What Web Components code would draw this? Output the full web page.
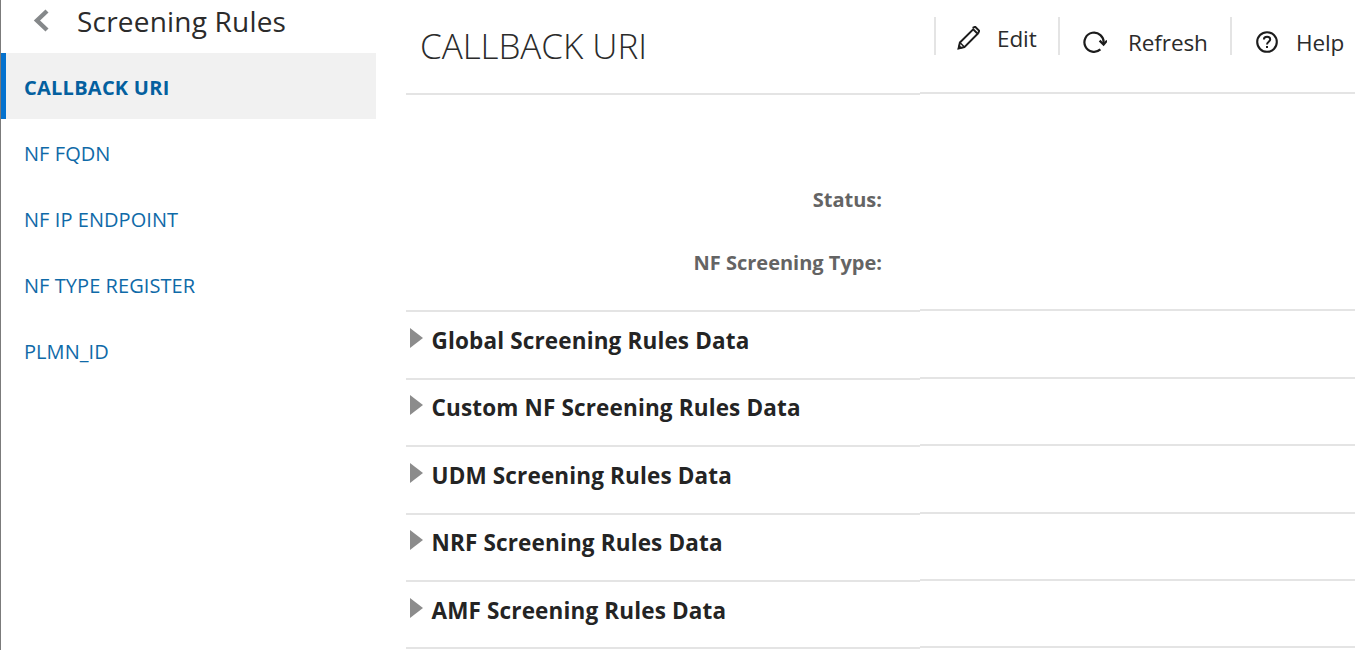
<!DOCTYPE html>
<html>
<head>
<meta charset="utf-8">
<title>Screening Rules</title>
<style>
  html, body { margin: 0; height: 100%; overflow: hidden; background: #fff; }
  body { font-family: "Open Sans", "Noto Sans", sans-serif; color: #2b2b2b; }
  #page { display: flex; height: 650px; border-left: 1px solid #7b7b7b; box-sizing: border-box; }
</style>
</head>
<body>
<div id="page">
  <su-side-nav title="Screening Rules">
    <su-nav-item selected>CALLBACK URI</su-nav-item>
    <su-nav-item>NF FQDN</su-nav-item>
    <su-nav-item>NF IP ENDPOINT</su-nav-item>
    <su-nav-item>NF TYPE REGISTER</su-nav-item>
    <su-nav-item>PLMN_ID</su-nav-item>
  </su-side-nav>
  <su-detail>
    <su-page-head title="CALLBACK URI"></su-page-head>
    <su-form-block>
      <su-field label="Status:"></su-field>
      <su-field label="NF Screening Type:"></su-field>
    </su-form-block>
    <su-collapsible>Global Screening Rules Data</su-collapsible>
    <su-collapsible>Custom NF Screening Rules Data</su-collapsible>
    <su-collapsible>UDM Screening Rules Data</su-collapsible>
    <su-collapsible>NRF Screening Rules Data</su-collapsible>
    <su-collapsible>AMF Screening Rules Data</su-collapsible>
  </su-detail>
</div>

<script>
class SideNav extends HTMLElement {
  constructor() {
    super();
    this.attachShadow({ mode: "open" });
    this.shadowRoot.innerHTML = `
      <style>
        :host { display: block; width: 375px; flex: none; }
        header { display: flex; align-items: center; height: 53px; box-sizing: border-box; padding: 0 0 11px 30px; }
        svg { width: 20px; height: 24px; flex: none; margin-right: 26px; }
        h2 { margin: 0; font-size: 28px; font-weight: 400; color: #2b2b2b; letter-spacing: 0.2px; }
      </style>
      <header>
        <svg viewBox="0 0 20 24"><path d="M16 2 L6 11.5 L16 21" fill="none" stroke="#85888a" stroke-width="4.4"/></svg>
        <h2>${this.getAttribute("title")}</h2>
      </header>
      <slot></slot>
    `;
  }
}

class NavItem extends HTMLElement {
  constructor() {
    super();
    this.attachShadow({ mode: "open" });
    this.shadowRoot.innerHTML = `
      <style>
        :host { display: flex; align-items: center; height: 66px; box-sizing: border-box; padding: 2px 0 0 23px; font-size: 20px; color: #0f6aa8; letter-spacing: 0.06px; }
        :host([selected]) { background: #f1f1f1; box-shadow: inset 5px 0 0 #0572ce; font-weight: 700; color: #04609f; letter-spacing: 0.25px; }
      </style>
      <slot></slot>
    `;
  }
}

class Detail extends HTMLElement {
  constructor() {
    super();
    this.attachShadow({ mode: "open" });
    this.shadowRoot.innerHTML = `
      <style>
        :host { display: block; flex: 1; min-width: 0; padding-left: 30px; }
      </style>
      <slot></slot>
    `;
  }
}

class PageHead extends HTMLElement {
  constructor() {
    super();
    this.attachShadow({ mode: "open" });
    this.shadowRoot.innerHTML = `
      <style>
        :host { display: grid; grid-template-columns: 514px 1fr; height: 95px; }
        .name { border-bottom: 2px solid #e4e4e4; padding-left: 14px; height: 95px; box-sizing: border-box; }
        h1 { margin: 0; padding-top: 22px; font-size: 35px; line-height: 48px; font-weight: 300; color: #2b2b2b; letter-spacing: -0.05px; }
        .bar { display: flex; align-items: flex-start; height: 94px; box-sizing: border-box; border-bottom: 2px solid #e4e4e4; padding: 17px 0 0 14px; }
      </style>
      <div class="name"><h1>${this.getAttribute("title")}</h1></div>
      <div class="bar">
        <su-tool-button label="Edit" icon="edit" width="124" pad="20" gap="17" top="4"></su-tool-button>
        <su-tool-button label="Refresh" icon="refresh" width="172" pad="23" gap="21" top="12"></su-tool-button>
        <su-tool-button label="Help" icon="help" width="124" pad="23" gap="17" top="12"></su-tool-button>
      </div>
    `;
  }
}

const TOOL_ICONS = {
  edit: `<path d="M2.6 22.4 L3.9 16.6 L17.2 3.3 L21.7 7.8 L8.4 21.1 Z" fill="none" stroke="#1c1c1c" stroke-width="2"/><path d="M3.9 16.6 L8.4 21.1 M2.6 22.4 L3.2 19.8 L5.2 21.8 Z" fill="#1c1c1c" stroke="#1c1c1c" stroke-width="1.4"/><path d="M16.6 1.9 L19.2 0.8 L23.2 4.8 L22.1 7.4" fill="none" stroke="#1c1c1c" stroke-width="2"/>`,
  refresh: `<path d="M20.6 13 A9.6 9.6 0 1 0 17.4 19.4" fill="none" stroke="#1c1c1c" stroke-width="2.2"/><path d="M16.6 10.6 L20.6 14.6 L24 10.6" fill="none" stroke="#1c1c1c" stroke-width="2.2"/>`,
  help: `<circle cx="12" cy="12" r="9.8" fill="none" stroke="#1c1c1c" stroke-width="2.1"/><path d="M8.9 9.6 C8.9 5.9 15.2 5.9 15.2 9.6 C15.2 11.8 12 11.8 12 14.4" fill="none" stroke="#1c1c1c" stroke-width="2"/><rect x="11" y="16" width="2" height="2" fill="#1c1c1c"/>`
};

class ToolButton extends HTMLElement {
  constructor() {
    super();
    this.attachShadow({ mode: "open" });
    this.shadowRoot.innerHTML = `
      <style>
        :host { display: flex; align-items: center; height: 38px; flex: none; box-sizing: border-box; width: ${this.getAttribute("width")}px; border-left: 2px solid #e4e4e4; padding: ${this.getAttribute("top")}px 0 0 ${this.getAttribute("pad")}px; font-size: 22.5px; color: #2b2b2b; }
        svg { width: 24px; height: 24px; flex: none; margin: 0 ${this.getAttribute("gap")}px 0 0; }
        span { letter-spacing: -0.1px; white-space: nowrap; }
      </style>
      <svg viewBox="0 0 24 24">${TOOL_ICONS[this.getAttribute("icon")]}</svg>
      <span>${this.getAttribute("label")}</span>
    `;
  }
}

class FormBlock extends HTMLElement {
  constructor() {
    super();
    this.attachShadow({ mode: "open" });
    this.shadowRoot.innerHTML = `
      <style>
        :host { display: grid; grid-template-columns: 514px 1fr; height: 217.3px; }
        .fields { padding-top: 91px; height: 217.3px; box-sizing: border-box; border-bottom: 2px solid #e4e4e4; }
        .rest { height: 216.3px; box-sizing: border-box; border-bottom: 2px solid #e4e4e4; }
      </style>
      <div class="fields"><slot></slot></div>
      <div class="rest"></div>
    `;
  }
}

class Field extends HTMLElement {
  constructor() {
    super();
    this.attachShadow({ mode: "open" });
    this.shadowRoot.innerHTML = `
      <style>
        :host { display: block; height: 63px; box-sizing: border-box; padding-right: 38px; text-align: right; font-size: 20px; line-height: 27px; font-weight: 700; color: #646464; }
      </style>
      <label>${this.getAttribute("label")}</label>
    `;
  }
}

class Collapsible extends HTMLElement {
  constructor() {
    super();
    this.attachShadow({ mode: "open" });
    this.shadowRoot.innerHTML = `
      <style>
        :host { display: grid; grid-template-columns: 514px 1fr; height: 67.45px; }
        .head { display: flex; align-items: flex-start; box-sizing: border-box; border-bottom: 2px solid #e4e4e4; padding: 12.5px 0 0 4px; }
        .rest { box-sizing: border-box; border-bottom: 2px solid #e4e4e4; margin-bottom: 1px; }
        i { width: 0; height: 0; margin-top: 3px; flex: none; border-style: solid; border-width: 10px 0 10px 13px; border-color: transparent transparent transparent #8c8c8c; }
        h3 { margin: 0 0 0 8.5px; font-size: 22.5px; line-height: 31px; font-weight: 700; color: #242424; letter-spacing: 0.15px; }
      </style>
      <div class="head"><i></i><h3><slot></slot></h3></div>
      <div class="rest"></div>
    `;
  }
}

customElements.define("su-side-nav", SideNav);
customElements.define("su-nav-item", NavItem);
customElements.define("su-detail", Detail);
customElements.define("su-page-head", PageHead);
customElements.define("su-tool-button", ToolButton);
customElements.define("su-form-block", FormBlock);
customElements.define("su-field", Field);
customElements.define("su-collapsible", Collapsible);
</script>
</body>
</html>
